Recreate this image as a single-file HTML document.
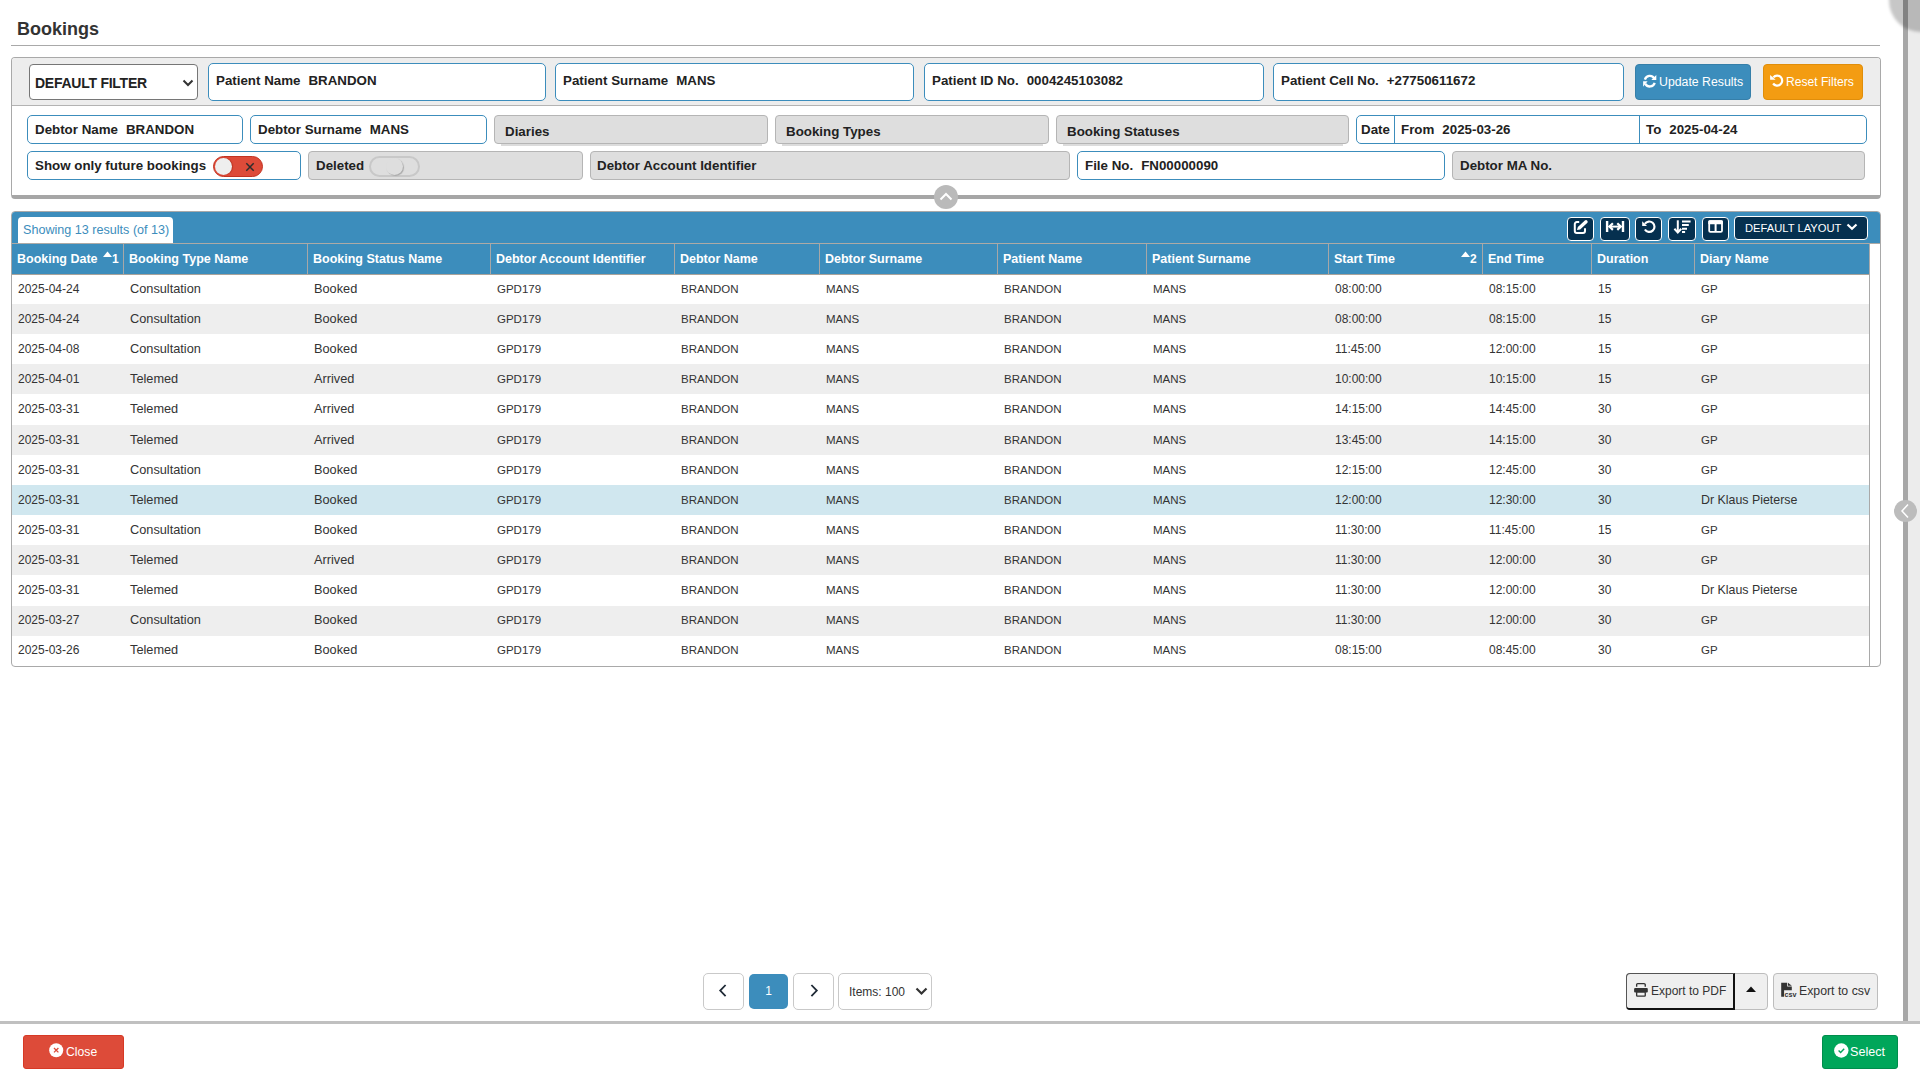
<!DOCTYPE html>
<html><head><meta charset="utf-8">
<style>
*{box-sizing:border-box;margin:0;padding:0}
html,body{width:1920px;height:1080px;overflow:hidden;background:#fff}
body{position:relative;font-family:"Liberation Sans",sans-serif;color:#333}
.a{position:absolute}
.title{left:17px;top:18px;font-size:18px;font-weight:bold;color:#333;line-height:22px}
.hr{left:11px;top:45px;width:1869px;height:1px;background:#a9a9a9}
.panel{left:11px;top:57px;width:1870px;height:142px;border:1px solid #a9a9a9;border-bottom:4px solid #a6a6a6;border-radius:4px;background:#fff;overflow:hidden}
.ptop{left:0;top:0;width:100%;height:48px;background:#ededed;border-bottom:1px solid #b3b3b3}
.f{position:absolute;border:1px solid #3c8dbc;border-radius:5px;background:#fff;font-size:13.33px;font-weight:bold;color:#222;white-space:nowrap;overflow:hidden}
.g{position:absolute;border:1px solid #b5b5b5;border-radius:4px;background:#dedede;font-size:13.33px;font-weight:bold;color:#222;white-space:nowrap}
.f span,.g span{position:absolute}
.btn{position:absolute;border-radius:4px;color:#fff;font-size:12px;white-space:nowrap}
.tbl{left:11px;top:211px;width:1870px;height:456px;border:1px solid #a9a9a9;border-radius:4px;overflow:hidden;background:#fff}
.tbar{left:0;top:0;width:100%;height:31px;background:#3c8dbc}
.tab{left:6px;top:5px;width:155px;height:27px;background:#fff;border-radius:4px 4px 0 0;color:#3c8dbc;font-size:12.6px;line-height:26px;padding-left:5px}
.hdr{left:0;top:31px;width:1857px;height:32px;background:#3c8dbc;border-top:1px solid #aaa49c;border-bottom:1px solid #aaa49c}
.th{position:absolute;top:244px;height:30px;line-height:30px;color:#fff;font-weight:bold;font-size:12.5px;padding-left:5px;border-left:1px solid #a7a7a7;white-space:nowrap}
.row{position:absolute;left:0;top:0;width:1px;height:30px;font-size:12px;color:#333}
.row span{position:absolute;top:0;line-height:30px;white-space:nowrap}
.tb{position:absolute;top:5px;height:23px;background:#05304f;border:1px solid #fff;border-radius:4px}
.pg{position:absolute;border:1px solid #c9c9c9;border-radius:5px;background:#fff}

.sel{position:absolute;border:1px solid #767676;border-radius:4px;background:#fff;font-size:14px;letter-spacing:-0.25px;font-weight:bold;color:#222}
.sel span{position:absolute;line-height:15px}
.f span,.g span{line-height:15px}
.f i,.g i{font-style:normal;margin-left:8px}
.btn span{position:absolute;line-height:14px}
.sh::after{content:"";position:absolute;left:6px;right:5px;bottom:-3px;height:2px;background:#dcdcdc}
.tg{border-radius:11px}
.knob{border-radius:50%}

.hdrbg{left:12px;top:243px;width:1857px;height:32px;background:#3c8dbc}
.hline{left:12px;width:1857px;height:1px;background:#a9a39b}
.hline.full{width:1868px;background:#adaaa6}
.hdr{left:0;top:244px;width:0;height:0;background:none;border:0}
.th{position:absolute;top:244px;height:30px;line-height:30px;color:#fff;font-weight:bold;font-size:12.5px;padding-left:5px;border-left:1px solid #a7a7a7;white-space:nowrap}
.row span.d{font-size:12px}
.row span.u{font-size:11.5px}
.row span.m{font-size:12.75px}
.row span.k{font-size:12.4px}

.sortn{font-size:12px;font-weight:bold;color:#fff;line-height:14px}
</style></head><body>
<div class="a title">Bookings</div>
<div class="a hr"></div>

<div class="a panel">
  <div class="a ptop"></div>
</div>
<!-- filter row 1 -->
<div class="sel" style="left:29px;top:64px;width:169px;height:36px"><span style="left:5px;top:11px">DEFAULT FILTER</span>
<svg class="a" style="left:152px;top:14px" width="12" height="8" viewBox="0 0 12 8"><path d="M1.5 1.5 L6 6 L10.5 1.5" fill="none" stroke="#333" stroke-width="2"/></svg></div>
<div class="f" style="left:208px;top:63px;width:338px;height:38px"><span style="left:7px;top:9px">Patient Name<i>BRANDON</i></span></div>
<div class="f" style="left:555px;top:63px;width:359px;height:38px"><span style="left:7px;top:9px">Patient Surname<i>MANS</i></span></div>
<div class="f" style="left:924px;top:63px;width:340px;height:38px"><span style="left:7px;top:9px">Patient ID No.<i>0004245103082</i></span></div>
<div class="f" style="left:1273px;top:63px;width:351px;height:38px"><span style="left:7px;top:9px">Patient Cell No.<i>+27750611672</i></span></div>
<div class="btn" style="left:1635px;top:64px;width:116px;height:36px;background:#3c8dbc;border:1px solid #367fa9"></div>
<svg class="a" style="left:1638px;top:70px" width="24" height="22" viewBox="0 0 24 22"><path d="M6.9 9.6 A5.1 5.1 0 0 1 16.2 8.3" fill="none" stroke="#fff" stroke-width="2.3"/><path d="M18.3 5 V9.9 H13.3 Z" fill="#fff"/><path d="M16.7 12.9 A5.1 5.1 0 0 1 7.4 13.9" fill="none" stroke="#fff" stroke-width="2.3"/><path d="M5.1 11.3 V16.8 L9.6 11.3 Z" fill="#fff"/></svg>
<span class="a" style="left:1659px;top:75px;font-size:12.3px;color:#fff;line-height:14px;white-space:nowrap">Update Results</span>
<div class="btn" style="left:1763px;top:64px;width:100px;height:36px;background:#f39c12;border:1px solid #e08e0b"></div>
<svg class="a" style="left:1766px;top:70px" width="24" height="22" viewBox="0 0 24 22"><path d="M7.37 7.39 A5 5 0 1 1 7.1 13.5" fill="none" stroke="#fff" stroke-width="2.2"/><path d="M4.1 4.9 V9.8 H9.6 Z" fill="#fff"/></svg>
<span class="a" style="left:1786px;top:75px;font-size:12.1px;color:#fff;line-height:14px;white-space:nowrap">Reset Filters</span>
<!-- filter row 2 -->
<div class="f" style="left:27px;top:115px;width:216px;height:29px"><span style="left:7px;top:6px">Debtor Name<i>BRANDON</i></span></div>
<div class="f" style="left:250px;top:115px;width:237px;height:29px"><span style="left:7px;top:6px">Debtor Surname<i>MANS</i></span></div>
<div class="g sh" style="left:494px;top:115px;width:274px;height:29px"><span style="left:10px;top:8px">Diaries</span></div>
<div class="g sh" style="left:775px;top:115px;width:274px;height:29px"><span style="left:10px;top:8px">Booking Types</span></div>
<div class="g sh" style="left:1056px;top:115px;width:293px;height:29px"><span style="left:10px;top:8px">Booking Statuses</span></div>
<div class="f" style="left:1356px;top:115px;width:511px;height:29px">
  <span style="left:4px;top:6px">Date</span>
  <div class="a" style="left:37px;top:0;width:1px;height:27px;background:#3c8dbc"></div>
  <span style="left:44px;top:6px">From<i>2025-03-26</i></span>
  <div class="a" style="left:282px;top:0;width:1px;height:27px;background:#3c8dbc"></div>
  <span style="left:289px;top:6px">To<i>2025-04-24</i></span>
</div>
<!-- filter row 3 -->
<div class="f" style="left:27px;top:151px;width:274px;height:29px"><span style="left:7px;top:6px">Show only future bookings</span>
  <div class="a tg" style="left:185px;top:4px;width:50px;height:21px;background:#dd4b39;border:1px solid #c23321"><div class="a knob" style="left:1px;top:1px;width:17px;height:17px;background:#eee;box-shadow:1px 0 1px #b8321f"></div>
  <svg class="a" style="left:31px;top:5px" width="10" height="10" viewBox="0 0 10 10"><path d="M1.3 1.3 L8.7 8.7 M8.7 1.3 L1.3 8.7" stroke="#2d2d2d" stroke-width="1.5"/></svg></div>
</div>
<div class="g" style="left:308px;top:151px;width:275px;height:29px"><span style="left:7px;top:6px">Deleted</span>
  <div class="a tg" style="left:60px;top:4px;width:51px;height:21px;background:#dedede;border:2px solid #c8c8c8"><div class="a knob" style="left:15px;top:0px;width:17px;height:17px;background:#dedede;box-shadow:1px 1px 1px #a9a9a9"></div></div>
</div>
<div class="g" style="left:590px;top:151px;width:480px;height:29px"><span style="left:6px;top:6px">Debtor Account Identifier</span></div>
<div class="f" style="left:1077px;top:151px;width:368px;height:29px"><span style="left:7px;top:6px">File No.<i>FN00000090</i></span></div>
<div class="g" style="left:1452px;top:151px;width:413px;height:29px"><span style="left:7px;top:6px">Debtor MA No.</span></div>
<!-- collapse button -->
<div class="a" style="left:934px;top:185px;width:24px;height:24px;border-radius:50%;background:#bababa"></div>
<svg class="a" style="left:939px;top:192px" width="14" height="10" viewBox="0 0 14 10"><path d="M1.5 7.5 L7 2 L12.5 7.5" fill="none" stroke="#fff" stroke-width="2"/></svg>


<div class="a tbl">
  <div class="a tbar"></div>
  <div class="a tab">Showing 13 results (of 13)</div>
</div>
<!--TABLE START-->
<div class="a" style="left:12px;top:243px;width:1857px;height:32px;background:#3c8dbc"></div>
<div class="a" style="left:12px;top:304px;width:1857px;height:30px;background:#eeeeee"></div>
<div class="a" style="left:12px;top:364px;width:1857px;height:30px;background:#eeeeee"></div>
<div class="a" style="left:12px;top:425px;width:1857px;height:30px;background:#eeeeee"></div>
<div class="a" style="left:12px;top:485px;width:1857px;height:30px;background:#d0e7ef"></div>
<div class="a" style="left:12px;top:545px;width:1857px;height:30px;background:#eeeeee"></div>
<div class="a" style="left:12px;top:606px;width:1857px;height:30px;background:#eeeeee"></div>
<div class="row" style="top:274px"><span class="d" style="left:18px">2025-04-24</span><span class="m" style="left:130px">Consultation</span><span class="m" style="left:314px">Booked</span><span class="u" style="left:497px">GPD179</span><span class="u" style="left:681px">BRANDON</span><span class="u" style="left:826px">MANS</span><span class="u" style="left:1004px">BRANDON</span><span class="u" style="left:1153px">MANS</span><span class="d" style="left:1335px">08:00:00</span><span class="d" style="left:1489px">08:15:00</span><span class="d" style="left:1598px">15</span><span class="u" style="left:1701px">GP</span></div>
<div class="row" style="top:304px"><span class="d" style="left:18px">2025-04-24</span><span class="m" style="left:130px">Consultation</span><span class="m" style="left:314px">Booked</span><span class="u" style="left:497px">GPD179</span><span class="u" style="left:681px">BRANDON</span><span class="u" style="left:826px">MANS</span><span class="u" style="left:1004px">BRANDON</span><span class="u" style="left:1153px">MANS</span><span class="d" style="left:1335px">08:00:00</span><span class="d" style="left:1489px">08:15:00</span><span class="d" style="left:1598px">15</span><span class="u" style="left:1701px">GP</span></div>
<div class="row" style="top:334px"><span class="d" style="left:18px">2025-04-08</span><span class="m" style="left:130px">Consultation</span><span class="m" style="left:314px">Booked</span><span class="u" style="left:497px">GPD179</span><span class="u" style="left:681px">BRANDON</span><span class="u" style="left:826px">MANS</span><span class="u" style="left:1004px">BRANDON</span><span class="u" style="left:1153px">MANS</span><span class="d" style="left:1335px">11:45:00</span><span class="d" style="left:1489px">12:00:00</span><span class="d" style="left:1598px">15</span><span class="u" style="left:1701px">GP</span></div>
<div class="row" style="top:364px"><span class="d" style="left:18px">2025-04-01</span><span class="m" style="left:130px">Telemed</span><span class="m" style="left:314px">Arrived</span><span class="u" style="left:497px">GPD179</span><span class="u" style="left:681px">BRANDON</span><span class="u" style="left:826px">MANS</span><span class="u" style="left:1004px">BRANDON</span><span class="u" style="left:1153px">MANS</span><span class="d" style="left:1335px">10:00:00</span><span class="d" style="left:1489px">10:15:00</span><span class="d" style="left:1598px">15</span><span class="u" style="left:1701px">GP</span></div>
<div class="row" style="top:394px"><span class="d" style="left:18px">2025-03-31</span><span class="m" style="left:130px">Telemed</span><span class="m" style="left:314px">Arrived</span><span class="u" style="left:497px">GPD179</span><span class="u" style="left:681px">BRANDON</span><span class="u" style="left:826px">MANS</span><span class="u" style="left:1004px">BRANDON</span><span class="u" style="left:1153px">MANS</span><span class="d" style="left:1335px">14:15:00</span><span class="d" style="left:1489px">14:45:00</span><span class="d" style="left:1598px">30</span><span class="u" style="left:1701px">GP</span></div>
<div class="row" style="top:425px"><span class="d" style="left:18px">2025-03-31</span><span class="m" style="left:130px">Telemed</span><span class="m" style="left:314px">Arrived</span><span class="u" style="left:497px">GPD179</span><span class="u" style="left:681px">BRANDON</span><span class="u" style="left:826px">MANS</span><span class="u" style="left:1004px">BRANDON</span><span class="u" style="left:1153px">MANS</span><span class="d" style="left:1335px">13:45:00</span><span class="d" style="left:1489px">14:15:00</span><span class="d" style="left:1598px">30</span><span class="u" style="left:1701px">GP</span></div>
<div class="row" style="top:455px"><span class="d" style="left:18px">2025-03-31</span><span class="m" style="left:130px">Consultation</span><span class="m" style="left:314px">Booked</span><span class="u" style="left:497px">GPD179</span><span class="u" style="left:681px">BRANDON</span><span class="u" style="left:826px">MANS</span><span class="u" style="left:1004px">BRANDON</span><span class="u" style="left:1153px">MANS</span><span class="d" style="left:1335px">12:15:00</span><span class="d" style="left:1489px">12:45:00</span><span class="d" style="left:1598px">30</span><span class="u" style="left:1701px">GP</span></div>
<div class="row" style="top:485px"><span class="d" style="left:18px">2025-03-31</span><span class="m" style="left:130px">Telemed</span><span class="m" style="left:314px">Booked</span><span class="u" style="left:497px">GPD179</span><span class="u" style="left:681px">BRANDON</span><span class="u" style="left:826px">MANS</span><span class="u" style="left:1004px">BRANDON</span><span class="u" style="left:1153px">MANS</span><span class="d" style="left:1335px">12:00:00</span><span class="d" style="left:1489px">12:30:00</span><span class="d" style="left:1598px">30</span><span class="k" style="left:1701px">Dr Klaus Pieterse</span></div>
<div class="row" style="top:515px"><span class="d" style="left:18px">2025-03-31</span><span class="m" style="left:130px">Consultation</span><span class="m" style="left:314px">Booked</span><span class="u" style="left:497px">GPD179</span><span class="u" style="left:681px">BRANDON</span><span class="u" style="left:826px">MANS</span><span class="u" style="left:1004px">BRANDON</span><span class="u" style="left:1153px">MANS</span><span class="d" style="left:1335px">11:30:00</span><span class="d" style="left:1489px">11:45:00</span><span class="d" style="left:1598px">15</span><span class="u" style="left:1701px">GP</span></div>
<div class="row" style="top:545px"><span class="d" style="left:18px">2025-03-31</span><span class="m" style="left:130px">Telemed</span><span class="m" style="left:314px">Arrived</span><span class="u" style="left:497px">GPD179</span><span class="u" style="left:681px">BRANDON</span><span class="u" style="left:826px">MANS</span><span class="u" style="left:1004px">BRANDON</span><span class="u" style="left:1153px">MANS</span><span class="d" style="left:1335px">11:30:00</span><span class="d" style="left:1489px">12:00:00</span><span class="d" style="left:1598px">30</span><span class="u" style="left:1701px">GP</span></div>
<div class="row" style="top:575px"><span class="d" style="left:18px">2025-03-31</span><span class="m" style="left:130px">Telemed</span><span class="m" style="left:314px">Booked</span><span class="u" style="left:497px">GPD179</span><span class="u" style="left:681px">BRANDON</span><span class="u" style="left:826px">MANS</span><span class="u" style="left:1004px">BRANDON</span><span class="u" style="left:1153px">MANS</span><span class="d" style="left:1335px">11:30:00</span><span class="d" style="left:1489px">12:00:00</span><span class="d" style="left:1598px">30</span><span class="k" style="left:1701px">Dr Klaus Pieterse</span></div>
<div class="row" style="top:605px"><span class="d" style="left:18px">2025-03-27</span><span class="m" style="left:130px">Consultation</span><span class="m" style="left:314px">Booked</span><span class="u" style="left:497px">GPD179</span><span class="u" style="left:681px">BRANDON</span><span class="u" style="left:826px">MANS</span><span class="u" style="left:1004px">BRANDON</span><span class="u" style="left:1153px">MANS</span><span class="d" style="left:1335px">11:30:00</span><span class="d" style="left:1489px">12:00:00</span><span class="d" style="left:1598px">30</span><span class="u" style="left:1701px">GP</span></div>
<div class="row" style="top:635px"><span class="d" style="left:18px">2025-03-26</span><span class="m" style="left:130px">Telemed</span><span class="m" style="left:314px">Booked</span><span class="u" style="left:497px">GPD179</span><span class="u" style="left:681px">BRANDON</span><span class="u" style="left:826px">MANS</span><span class="u" style="left:1004px">BRANDON</span><span class="u" style="left:1153px">MANS</span><span class="d" style="left:1335px">08:15:00</span><span class="d" style="left:1489px">08:45:00</span><span class="d" style="left:1598px">30</span><span class="u" style="left:1701px">GP</span></div>
<div class="a hline full" style="top:243px"></div>
<div class="a hline" style="top:274px"></div>
<div class="th" style="left:11px;width:112px">Booking Date</div><div class="th" style="left:123px;width:184px">Booking Type Name</div><div class="th" style="left:307px;width:183px">Booking Status Name</div><div class="th" style="left:490px;width:184px">Debtor Account Identifier</div><div class="th" style="left:674px;width:145px">Debtor Name</div><div class="th" style="left:819px;width:178px">Debtor Surname</div><div class="th" style="left:997px;width:149px">Patient Name</div><div class="th" style="left:1146px;width:182px">Patient Surname</div><div class="th" style="left:1328px;width:154px">Start Time</div><div class="th" style="left:1482px;width:109px">End Time</div><div class="th" style="left:1591px;width:103px">Duration</div><div class="th" style="left:1694px;width:175px">Diary Name</div>
<!--TABLE END-->
<div class="a" style="left:1869px;top:243px;width:1px;height:423px;background:#a9a9a9"></div>


<!-- sort indicators -->
<svg class="a" style="left:102px;top:250px" width="11" height="8" viewBox="0 0 11 8"><path d="M1 7 L5.5 1.5 L10 7 Z" fill="#fff"/></svg>
<div class="a sortn" style="left:112px;top:252px">1</div>
<svg class="a" style="left:1460px;top:250px" width="11" height="8" viewBox="0 0 11 8"><path d="M1 7 L5.5 1.5 L10 7 Z" fill="#fff"/></svg>
<div class="a sortn" style="left:1470px;top:252px">2</div>

<!-- toolbar -->
<div class="tb" style="left:1567px;top:217px;width:27px;height:24px">
 <svg class="a" style="left:0;top:-1px" width="25" height="22" viewBox="0 0 25 22"><path d="M11.2 5.1 H8.8 a2 2 0 0 0 -2 2 V13.9 a2 2 0 0 0 2 2 H15 a2 2 0 0 0 2 -2 V11.3" fill="none" stroke="#fff" stroke-width="2"/><path d="M9 13.1 L9.85 9.94 L16.85 3.54 A1.63 1.63 0 0 1 19.15 6.06 L12.15 12.46 Z" fill="#fff"/></svg></div>
<div class="tb" style="left:1600px;top:217px;width:30px;height:24px">
 <svg class="a" style="left:0;top:-1px" width="28" height="22" viewBox="0 0 28 22"><path d="M6.1 4.1 V14.9 M22 4.1 V14.9" stroke="#fff" stroke-width="2.4"/><path d="M9 9.6 H19" stroke="#fff" stroke-width="2"/><path d="M11.9 6.3 L8.4 9.6 L11.9 12.9 M16.3 6.3 L19.8 9.6 L16.3 12.9" fill="none" stroke="#fff" stroke-width="2.2"/></svg></div>
<div class="tb" style="left:1635px;top:217px;width:27px;height:24px">
 <svg class="a" style="left:0;top:-1px" width="25" height="22" viewBox="0 0 25 22"><path d="M8.9 6.9 A5.2 5.2 0 1 1 8.9 12.5" fill="none" stroke="#fff" stroke-width="2.2"/><path d="M6.2 4.3 V8.9 H11 Z" fill="#fff"/></svg></div>
<div class="tb" style="left:1668px;top:217px;width:28px;height:24px">
 <svg class="a" style="left:0;top:-1px" width="26" height="22" viewBox="0 0 26 22"><path d="M8.8 3.3 V15" stroke="#fff" stroke-width="2"/><path d="M5.4 11.8 L8.8 15.5 L12.2 11.8" fill="none" stroke="#fff" stroke-width="2"/><path d="M13 4.5 H21.6 M13 8.1 H19.8 M13 11.7 H18 M13 15.1 H16.1" stroke="#fff" stroke-width="2"/></svg></div>
<div class="tb" style="left:1702px;top:217px;width:27px;height:24px">
 <svg class="a" style="left:0;top:-1px" width="25" height="22" viewBox="0 0 25 22"><rect x="6.2" y="4.15" width="12.8" height="10.7" rx="1.2" fill="none" stroke="#fff" stroke-width="1.8"/><rect x="5.3" y="3.25" width="14.6" height="4.1" rx="1.2" fill="#fff"/><path d="M12.6 6 V15" stroke="#fff" stroke-width="2"/></svg></div>
<div class="tb" style="left:1734px;top:216px;width:134px;height:24px">
 <span class="a" style="left:10px;top:5px;font-size:11.2px;color:#fff;line-height:13px;white-space:nowrap">DEFAULT LAYOUT</span>
 <svg class="a" style="left:111px;top:6px" width="12" height="8" viewBox="0 0 12 8"><path d="M1.5 1.5 L6 5.8 L10.5 1.5" fill="none" stroke="#fff" stroke-width="2.2"/></svg></div>

<!-- pagination -->
<div class="pg" style="left:703px;top:973px;width:41px;height:37px">
 <svg class="a" style="left:14px;top:9px" width="10" height="16" viewBox="0 0 10 16"><path d="M7.6 2 L2.2 7.6 L7.6 13.2" fill="none" stroke="#1f2a36" stroke-width="1.8"/></svg></div>
<div class="a" style="left:749px;top:974px;width:39px;height:35px;background:#3c8dbc;border-radius:5px;color:#fff;font-size:12px;line-height:35px;text-align:center">1</div>
<div class="pg" style="left:793px;top:973px;width:41px;height:37px">
 <svg class="a" style="left:15px;top:9px" width="10" height="16" viewBox="0 0 10 16"><path d="M2.4 2 L7.8 7.6 L2.4 13.2" fill="none" stroke="#1f2a36" stroke-width="1.8"/></svg></div>
<div class="pg" style="left:838px;top:973px;width:94px;height:37px">
 <span class="a" style="left:10px;top:11px;font-size:12px;color:#333;line-height:14px;white-space:nowrap">Items: 100</span>
 <svg class="a" style="left:76px;top:13px" width="13" height="9" viewBox="0 0 13 9"><path d="M1.5 1.5 L6.5 6.5 L11.5 1.5" fill="none" stroke="#333" stroke-width="2.2"/></svg></div>

<!-- export buttons -->
<div class="a" style="left:1626px;top:973px;width:142px;height:37px;background:#efefef;border:1px solid #bdbdbd;border-radius:4px"></div>
<div class="a" style="left:1626px;top:973px;width:109px;height:37px;border:1px solid #555;border-right:2px solid #111;border-bottom:2px solid #111;border-radius:4px 0 0 4px"></div>
<svg class="a" style="left:1633px;top:982px" width="16" height="16" viewBox="0 0 16 16"><path d="M3.65 4.8 V2.6 a1 1 0 0 1 1 -1 H11 a1.2 1.2 0 0 1 1.25 1.2 V4.8" fill="none" stroke="#333" stroke-width="1.35"/><rect x="1.1" y="6" width="13.7" height="4.6" rx="1" fill="#333"/><rect x="3.65" y="10.1" width="8.6" height="3.95" rx="0.6" fill="#efefef" stroke="#333" stroke-width="1.35"/></svg>
<span class="a" style="left:1651px;top:984px;font-size:12px;color:#333;line-height:14px;white-space:nowrap">Export to PDF</span>
<svg class="a" style="left:1745px;top:985px" width="12" height="8" viewBox="0 0 12 8"><path d="M1 7 L6 1.5 L11 7 Z" fill="#111"/></svg>
<div class="a" style="left:1773px;top:973px;width:105px;height:37px;background:#efefef;border:1px solid #bdbdbd;border-radius:4px"></div>
<svg class="a" style="left:1781px;top:982px" width="17" height="16" viewBox="0 0 17 16"><path d="M0.2 0.7 H6.2 V4.5 H10.8 V8.3 H3.1 V14.7 H0.2 Z" fill="#333"/><path d="M7 0.7 L10.8 3.8 H7 Z" fill="#333"/><text x="3.4" y="14.7" font-family="Liberation Sans" font-size="7.2" font-weight="bold" fill="#333">csv</text></svg>
<span class="a" style="left:1799px;top:984px;font-size:12.3px;color:#333;line-height:14px;white-space:nowrap">Export to csv</span>

<!-- footer -->
<div class="a" style="left:0;top:1021px;width:1920px;height:3px;background:#c0c0c0"></div>
<div class="a" style="left:23px;top:1035px;width:101px;height:34px;background:#dd4b39;border:1px solid #d73925;border-radius:3px"></div>
<svg class="a" style="left:49px;top:1043px" width="15" height="15" viewBox="0 0 15 15"><circle cx="7.2" cy="7.2" r="7" fill="#fff"/><path d="M5 5 L9.4 9.4 M9.4 5 L5 9.4" stroke="#dd4b39" stroke-width="1.3"/></svg>
<span class="a" style="left:66px;top:1045px;font-size:12.2px;color:#fff;line-height:14px">Close</span>
<div class="a" style="left:1822px;top:1035px;width:76px;height:34px;background:#00a65a;border:1px solid #008d4c;border-radius:3px"></div>
<svg class="a" style="left:1834px;top:1043px" width="15" height="15" viewBox="0 0 15 15"><circle cx="7.3" cy="7.5" r="7.2" fill="#fff"/><path d="M4.6 7.6 L6.6 9.6 L10.2 5.8" fill="none" stroke="#00a65a" stroke-width="1.4"/></svg>
<span class="a" style="left:1850px;top:1045px;font-size:12.6px;color:#fff;line-height:14px">Select</span>

<!-- right bar -->
<div class="a" style="left:1908px;top:0;width:12px;height:1021px;background:#ececec"></div>
<div class="a" style="left:1903px;top:0;width:5px;height:1021px;background:#a7a7a7"></div>
<div class="a" style="left:1889px;top:-31px;width:63px;height:63px;border-radius:50%;background:rgba(0,0,0,0.22);filter:blur(1.5px)"></div>
<div class="a" style="left:1894px;top:500px;width:23px;height:22px;border-radius:50%;background:#bcbcbc"></div>
<svg class="a" style="left:1899px;top:503px" width="12" height="16" viewBox="0 0 12 16"><path d="M9 1.5 L3 8 L9 14.5" fill="none" stroke="#fff" stroke-width="1.5"/></svg>
</body></html>
